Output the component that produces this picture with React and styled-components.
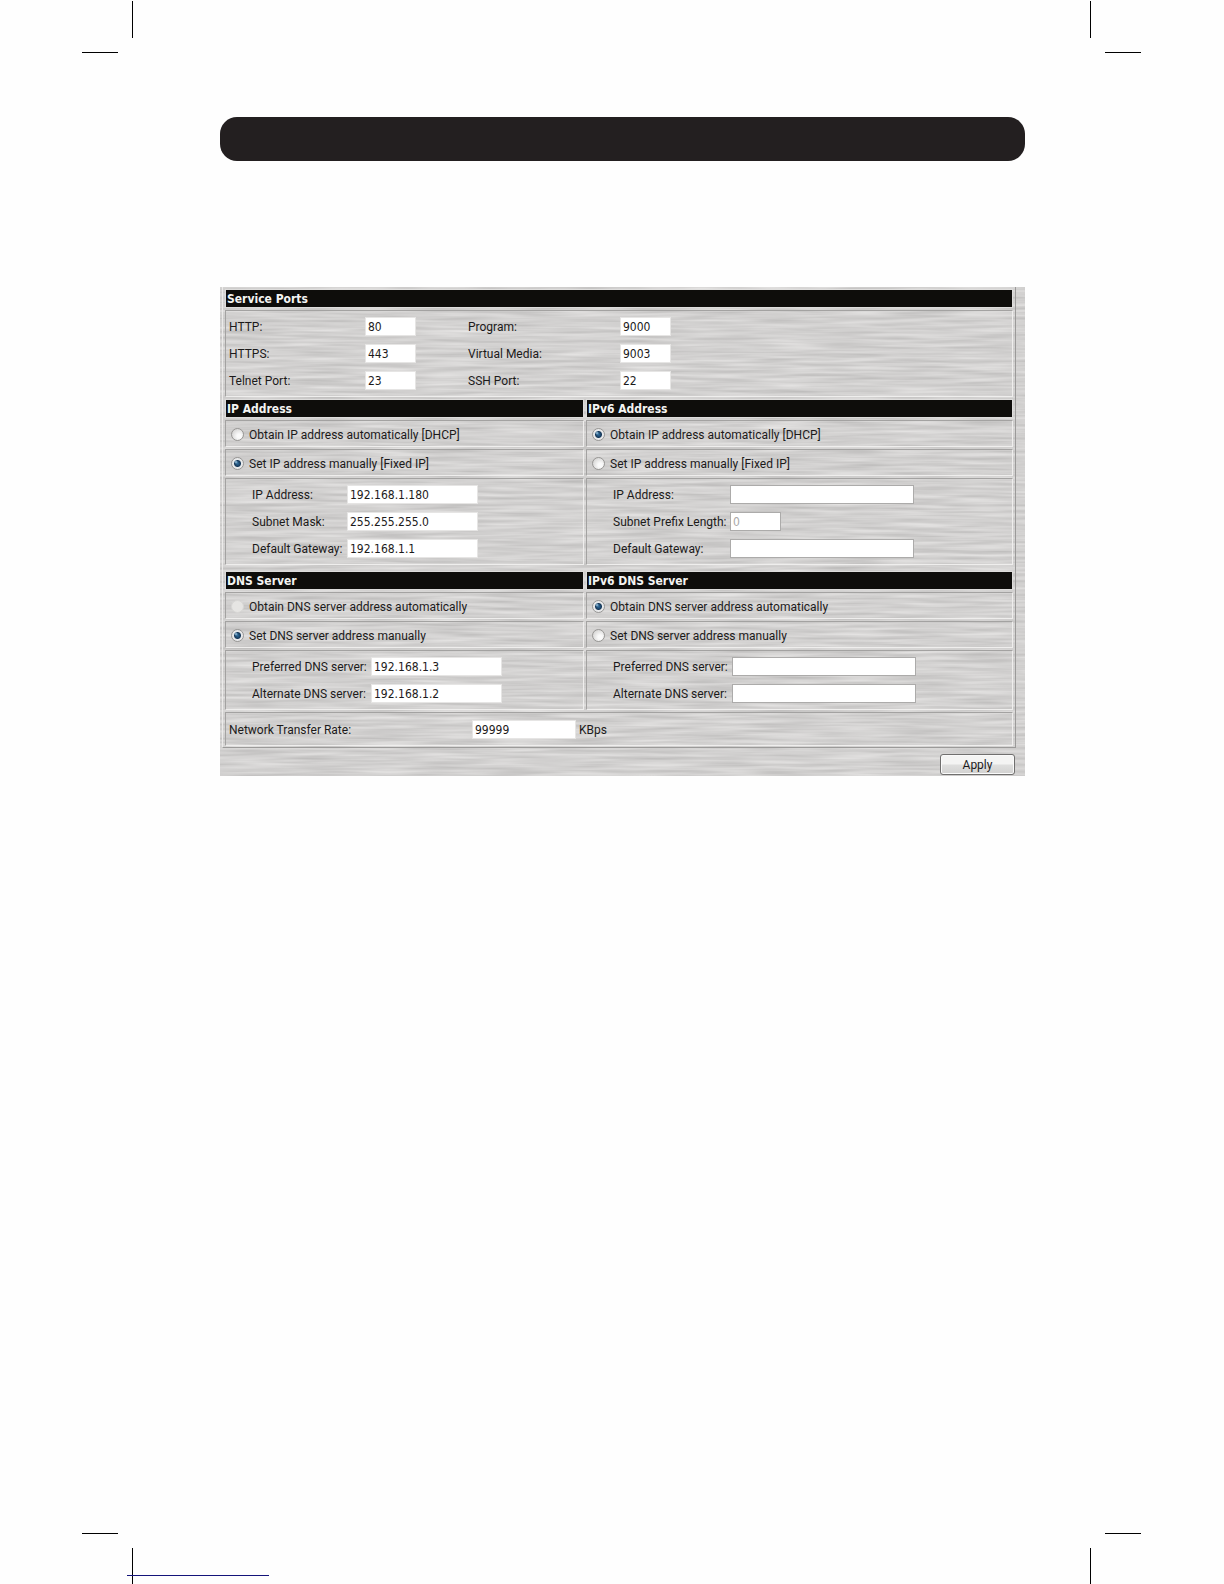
import styled, { createGlobalStyle, css } from 'styled-components'

const GlobalStyle = createGlobalStyle`
  *, *::before, *::after {
    box-sizing: border-box;
  }

  body {
    margin: 0;
    background: #fefefe;
    color: #1c1a1a;
    font-family: Roboto, 'Noto Sans', sans-serif;
    font-size: 12px;
    line-height: 16px;
  }

  label {
    white-space: nowrap;
  }
`

const Page = styled.div`
  position: relative;
  min-height: 100vh;
  padding: 117px 199px 80px 220px;
`

const Mark = styled.svg`
  position: absolute;
  ${({ $bottom }) => $bottom ? 'bottom: 0;' : 'top: 0;'}
  ${({ $right }) => $right ? 'right: 83px;' : 'left: 82px;'}
  transform: scale(${({ $right }) => $right ? -1 : 1}, ${({ $bottom }) => $bottom ? -1 : 1});
`

const FooterRule = styled.div`
  position: absolute;
  left: 127px;
  bottom: 8px;
  width: 142px;
  height: 1px;
  background: #14147a;
`

const Banner = styled.header`
  height: 44px;
  margin-bottom: 126px;
  border-radius: 17px;
  background: #231f20;
`

const Panel = styled.form`
  position: relative;
  isolation: isolate;
  background: #cfcecd;
`

const Texture = styled.svg`
  position: absolute;
  inset: 0;
  width: 100%;
  height: 100%;
  z-index: -1;
`

const Frame = styled.div`
  display: grid;
  grid-template-columns: minmax(0, 359fr) minmax(0, 427fr);
  gap: 2px;
  margin: 0 9px 0 2px;
  padding: 2px 2px 1px;
  border: solid;
  border-width: 0 1px 1px;
  border-color: #9b9a99 #9b9a99 #9b9a99 #ecebea;
`

const wide = css`
  grid-column: 1 / -1;
`

const Heading = styled.h2`
  ${({ $wide }) => $wide && wide}
  margin: 0;
  padding: 1px 1px 0;
  border: 1px solid #dddcdb;
  background: #0e0d0b;
  color: #f4f4f2;
  font-family: 'DejaVu Sans Condensed', 'Noto Sans', sans-serif;
  font-size: 12px;
  font-weight: 700;
  line-height: 16px;
`

const Cell = styled.div`
  ${({ $wide }) => $wide && wide}
  border: 1px solid;
  border-color: #a3a2a1 #efeeed #efeeed #a3a2a1;
`

const PortGrid = styled(Cell)`
  display: grid;
  grid-template-columns: 136px 103px 152px 1fr;
  align-items: center;
  gap: 8px 0;
  padding: 6px 3px;
`

const FieldGrid = styled(Cell)`
  display: grid;
  grid-template-columns: ${({ $label }) => $label} 1fr;
  align-items: center;
  align-content: start;
  gap: 8px 0;
  padding: 6px 3px 6px 26px;
  margin-bottom: ${({ $spaced }) => $spaced ? '4px' : '0'};
`

const RateRow = styled(Cell)`
  display: grid;
  grid-template-columns: 243px 107px 1fr;
  align-items: center;
  padding: 7px 3px 6px;
`

const RadioRow = styled(Cell)`
  display: flex;
  align-items: center;
  gap: 5px;
  height: 27px;
  padding: 2px 0 0 5px;
`

const widths = {
  small: '51px',
  rate: '104px',
  medium: '131px',
  large: '184px',
}

const TextBox = styled.input`
  width: ${({ $size }) => widths[$size]};
  height: 19px;
  padding: 0 2px;
  border: 1px solid ${({ $outlined }) => $outlined ? '#acabaa' : '#e6e5e4'};
  border-radius: 0;
  background: #fff;
  color: inherit;
  font-family: 'DejaVu Sans Condensed', 'Noto Sans', sans-serif;
  font-size: 12px;

  &:disabled {
    color: #a9a8a7;
  }
`

const Radio = styled.input`
  appearance: none;
  flex: none;
  width: 13px;
  height: 13px;
  margin: 0;
  border: 1px solid #979694;
  border-radius: 50%;
  background: radial-gradient(circle at 65% 65%, #fafafa 20%, #cfcecd 90%);

  &:checked {
    background:
      radial-gradient(circle at 4px 4px, #a5d2ee 0, transparent 2px),
      radial-gradient(circle at center, #2e6c9c 0, #17395a 3px, #e8e9ea 4px);
  }

  &:disabled {
    border-color: #d8d7d5;
    background: #e6e5e3;
  }
`

const Actions = styled.div`
  display: flex;
  justify-content: flex-end;
  padding: 6px 10px 1px;
`

const ApplyButton = styled.button`
  width: 75px;
  height: 21px;
  padding: 0;
  border: 1px solid #706f6e;
  border-radius: 3px;
  background: linear-gradient(#f4f4f3 45%, #dededd 55%, #d2d1d0);
  box-shadow: inset 0 0 0 1px #fafafa;
  color: inherit;
  font: inherit;
`

function CropMark({ right, bottom }) {
  return (
    <Mark
      $right={right}
      $bottom={bottom}
      width="51"
      height={bottom ? 51 : 53}
      viewBox={bottom ? '0 2 51 51' : '0 0 51 53'}
      aria-hidden="true"
    >
      <path d="M50 1h1v37h-1zM0 52h36v1H0z" fill="#000" />
    </Mark>
  )
}

function BrushedMetal() {
  return (
    <Texture aria-hidden="true">
      <filter id="brushed" x="0" y="0" width="100%" height="100%" colorInterpolationFilters="sRGB">
        <feTurbulence type="fractalNoise" baseFrequency="0.015 0.3" numOctaves="2" seed="7" />
        <feColorMatrix values="0.2 0 0 0 0.723  0.2 0 0 0 0.718  0.2 0 0 0 0.715  0 0 0 0 1" />
      </filter>
      <rect width="100%" height="100%" filter="url(#brushed)" />
    </Texture>
  )
}

function Field({ id, label, value, size, outlined, disabled }) {
  return (
    <>
      <label htmlFor={id}>{label}</label>
      <TextBox id={id} type="text" defaultValue={value} $size={size} $outlined={outlined} disabled={disabled} />
    </>
  )
}

function Choice({ id, name, label, checked, disabled }) {
  return (
    <RadioRow>
      <Radio type="radio" id={id} name={name} defaultChecked={checked} disabled={disabled} />
      <label htmlFor={id}>{label}</label>
    </RadioRow>
  )
}

const ports = [
  { id: 'http', label: 'HTTP:', value: '80' },
  { id: 'program', label: 'Program:', value: '9000' },
  { id: 'https', label: 'HTTPS:', value: '443' },
  { id: 'media', label: 'Virtual Media:', value: '9003' },
  { id: 'telnet', label: 'Telnet Port:', value: '23' },
  { id: 'ssh', label: 'SSH Port:', value: '22' },
]

export default function App() {
  return (
    <Page>
      <GlobalStyle />
      <CropMark />
      <CropMark right />
      <CropMark bottom />
      <CropMark right bottom />
      <FooterRule />

      <Banner />

      <Panel onSubmit={(e) => e.preventDefault()}>
        <BrushedMetal />
        <Frame>
          <Heading $wide>Service Ports</Heading>
          <PortGrid $wide>
            {ports.map((port) => <Field key={port.id} size="small" {...port} />)}
          </PortGrid>

          <Heading>IP Address</Heading>
          <Heading>IPv6 Address</Heading>
          <Choice id="ip-auto" name="ip" label="Obtain IP address automatically [DHCP]" />
          <Choice id="ip6-auto" name="ip6" label="Obtain IP address automatically [DHCP]" checked />
          <Choice id="ip-fixed" name="ip" label="Set IP address manually [Fixed IP]" checked />
          <Choice id="ip6-fixed" name="ip6" label="Set IP address manually [Fixed IP]" />
          <FieldGrid $label="95px" $spaced>
            <Field id="ip-address" label="IP Address:" value="192.168.1.180" size="medium" />
            <Field id="ip-mask" label="Subnet Mask:" value="255.255.255.0" size="medium" />
            <Field id="ip-gateway" label="Default Gateway:" value="192.168.1.1" size="medium" />
          </FieldGrid>
          <FieldGrid $label="117px" $spaced>
            <Field id="ip6-address" label="IP Address:" size="large" outlined disabled />
            <Field id="ip6-prefix" label="Subnet Prefix Length:" value="0" size="small" outlined disabled />
            <Field id="ip6-gateway" label="Default Gateway:" size="large" outlined disabled />
          </FieldGrid>

          <Heading>DNS Server</Heading>
          <Heading>IPv6 DNS Server</Heading>
          <Choice id="dns-auto" name="dns" label="Obtain DNS server address automatically" disabled />
          <Choice id="dns6-auto" name="dns6" label="Obtain DNS server address automatically" checked />
          <Choice id="dns-fixed" name="dns" label="Set DNS server address manually" checked />
          <Choice id="dns6-fixed" name="dns6" label="Set DNS server address manually" />
          <FieldGrid $label="119px">
            <Field id="dns-preferred" label="Preferred DNS server:" value="192.168.1.3" size="medium" />
            <Field id="dns-alternate" label="Alternate DNS server:" value="192.168.1.2" size="medium" />
          </FieldGrid>
          <FieldGrid $label="119px">
            <Field id="dns6-preferred" label="Preferred DNS server:" size="large" outlined disabled />
            <Field id="dns6-alternate" label="Alternate DNS server:" size="large" outlined disabled />
          </FieldGrid>

          <RateRow $wide>
            <Field id="rate" label="Network Transfer Rate:" value="99999" size="rate" />
            <span>KBps</span>
          </RateRow>
        </Frame>
        <Actions>
          <ApplyButton type="submit">Apply</ApplyButton>
        </Actions>
      </Panel>
    </Page>
  )
}
